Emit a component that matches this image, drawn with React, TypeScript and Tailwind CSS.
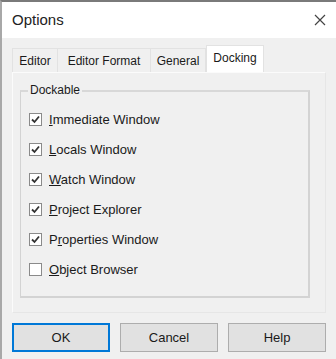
import React from "react";

const items: { pre: string; key: string; post: string; checked: boolean }[] = [
  { pre: "", key: "I", post: "mmediate Window", checked: true },
  { pre: "", key: "L", post: "ocals Window", checked: true },
  { pre: "", key: "W", post: "atch Window", checked: true },
  { pre: "", key: "P", post: "roject Explorer", checked: true },
  { pre: "P", key: "r", post: "operties Window", checked: true },
  { pre: "", key: "O", post: "bject Browser", checked: false },
];

function Check({ checked }: { checked: boolean }) {
  return (
    <div className="w-[13px] h-[13px] border border-[#8a8a8a] bg-white flex items-center justify-center">
      {checked && (
        <svg width="9" height="9" viewBox="0 0 9 9">
          <path d="M1 4.5 L3.5 7 L8 1.5" stroke="#333" strokeWidth="1.8" fill="none" />
        </svg>
      )}
    </div>
  );
}

export default function App() {
  return (
    <div
      className="w-[336px] h-[359px] bg-[#f0f0f0] border-t-2 border-t-[#7a7a7a] border-l-2 border-l-[#a8a8a8] flex flex-col text-[#1a1a1a]"
      style={{ fontFamily: '"Liberation Sans", Arial, sans-serif' }}
    >
      <div className="h-[36px] bg-white flex items-center justify-between pl-[10px] pr-[10px] shrink-0">
        <span className="text-[15px] text-[#222]">Options</span>
        <svg width="12" height="12" viewBox="0 0 12 12">
          <path d="M1 1 L11 11 M11 1 L1 11" stroke="#444" strokeWidth="1.2" />
        </svg>
      </div>
      <div className="flex flex-col pl-[10px] pr-[10px]">
        <div className="flex items-end h-[34px] text-[12px]">
          <div className="h-[24px] w-[46px] border border-[#e2e2e2] border-b-0 flex items-center justify-center">Editor</div>
          <div className="h-[24px] w-[93px] border border-[#e2e2e2] border-b-0 border-l-0 flex items-center justify-center">Editor Format</div>
          <div className="h-[24px] w-[55px] border border-[#e2e2e2] border-b-0 border-l-0 flex items-center justify-center">General</div>
          <div className="h-[27px] w-[58px] bg-white border border-[#e2e2e2] border-b-0 flex items-center justify-center pb-[2px]">Docking</div>
        </div>
        <div className="h-[241px] border border-[#fbfbfb] border-r-[#e6e6e6] border-b-[#e6e6e6] px-[7px] pt-[17px]">
          <div className="relative h-[208px] w-[290px] border border-[#d3d3d3] border-t-2 border-r-2 border-b-2 border-t-[#d8d8d8] pt-[21px] pl-[8px]">
            <span className="absolute left-[7px] top-[-9px] bg-[#f0f0f0] px-[2px] text-[12px] leading-[14px]">Dockable</span>
            <div className="flex flex-col gap-[17px]">
              {items.map((it) => (
                <div key={it.post} className="flex items-center h-[13px] gap-[7px] text-[13px]">
                  <Check checked={it.checked} />
                  <span>
                    {it.pre}
                    <span className="underline">{it.key}</span>
                    {it.post}
                  </span>
                </div>
              ))}
            </div>
          </div>
        </div>
        <div className="flex gap-[10px] mt-[10px] text-[13px]">
          <button className="w-[98px] h-[29px] bg-[#e1e1e1] border-2 border-[#0078d7]">OK</button>
          <button className="w-[98px] h-[29px] bg-[#e1e1e1] border border-[#adadad]">Cancel</button>
          <button className="w-[98px] h-[29px] bg-[#e1e1e1] border border-[#adadad]">Help</button>
        </div>
      </div>
    </div>
  );
}
